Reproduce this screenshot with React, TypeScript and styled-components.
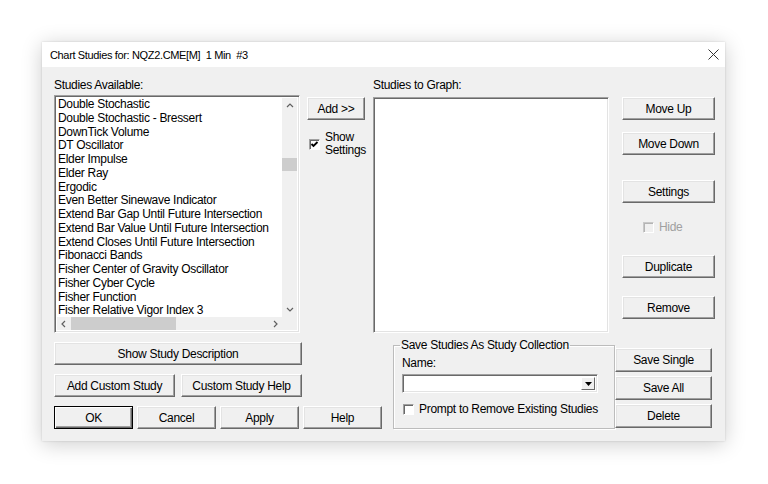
import React from "react";
import styled, { createGlobalStyle } from "styled-components";

const GlobalStyle = createGlobalStyle`
  html, body {
    margin: 0;
    padding: 0;
    background: #ffffff;
  }
  body {
    font-family: "Liberation Sans", Arial, sans-serif;
  }
`;

const studies = [
  "Double Stochastic",
  "Double Stochastic - Bressert",
  "DownTick Volume",
  "DT Oscillator",
  "Elder Impulse",
  "Elder Ray",
  "Ergodic",
  "Even Better Sinewave Indicator",
  "Extend Bar Gap Until Future Intersection",
  "Extend Bar Value Until Future Intersection",
  "Extend Closes Until Future Intersection",
  "Fibonacci Bands",
  "Fisher Center of Gravity Oscillator",
  "Fisher Cyber Cycle",
  "Fisher Function",
  "Fisher Relative Vigor Index 3",
];

const Page = styled.div`
  width: 768px;
  height: 484px;
  padding: 42px 0 0 42px;
  box-sizing: border-box;
  overflow: hidden;
`;

const Dialog = styled.div`
  width: 683px;
  height: 399px;
  background: #f0f0f0;
  box-shadow: 0 3px 20px rgba(0, 0, 0, 0.2), 0 0 2px rgba(0, 0, 0, 0.15);
  display: flex;
  flex-direction: column;
`;

const TitleBar = styled.div`
  height: 25px;
  background: #ffffff;
  display: flex;
  align-items: center;
  justify-content: space-between;
  padding: 0 6px 0 8px;
  flex-shrink: 0;
`;

const Title = styled.span`
  font-size: 11px;
  letter-spacing: -0.35px;
  color: #000;
  white-space: pre;
`;

const Body = styled.div`
  flex: 1;
  padding: 10px 12px 0 12px;
  font-size: 12px;
  letter-spacing: -0.3px;
  color: #000;
`;

const TopRow = styled.div`
  display: flex;
  align-items: flex-start;
`;

const Column = styled.div<{ $w: number; $ml?: number; $mt?: number }>`
  width: ${(p) => p.$w}px;
  margin-left: ${(p) => p.$ml ?? 0}px;
  margin-top: ${(p) => p.$mt ?? 0}px;
  display: flex;
  flex-direction: column;
  align-items: flex-start;
  flex-shrink: 0;
`;

const Label = styled.div<{ $h?: number; $mt?: number }>`
  height: ${(p) => p.$h ?? 18}px;
  margin-top: ${(p) => p.$mt ?? 0}px;
  line-height: 16px;
  white-space: nowrap;
`;

const sunken = `
  border: 1px solid;
  border-color: #a0a0a0 #ffffff #ffffff #a0a0a0;
  box-shadow: inset 1px 1px 0 #696969, inset -1px -1px 0 #e3e3e3;
`;

const ListBox = styled.div`
  ${sunken}
  width: 246px;
  height: 238px;
  box-sizing: border-box;
  padding: 2px;
  background: #ffffff;
  display: grid;
  grid-template-columns: 1fr 15px;
  grid-template-rows: 1fr 13px;
`;

const Items = styled.div`
  overflow: hidden;
  padding: 0 0 0 1px;
`;

const Item = styled.div`
  height: 13.75px;
  line-height: 13.75px;
  white-space: nowrap;
`;

const ScrollBar = styled.div<{ $horizontal?: boolean }>`
  background: #f0f0f0;
  display: flex;
  flex-direction: ${(p) => (p.$horizontal ? "row" : "column")};
  align-items: center;
`;

const Arrow = styled.div<{ $horizontal?: boolean }>`
  width: ${(p) => (p.$horizontal ? 13 : 15)}px;
  height: ${(p) => (p.$horizontal ? 13 : 15)}px;
  display: flex;
  align-items: center;
  justify-content: center;
  flex-shrink: 0;
`;

const Track = styled.div<{ $horizontal?: boolean }>`
  flex: 1;
  align-self: stretch;
  display: flex;
  flex-direction: ${(p) => (p.$horizontal ? "row" : "column")};
`;

const Thumb = styled.div<{ $horizontal?: boolean; $start: number; $size: number }>`
  background: #cdcdcd;
  ${(p) =>
    p.$horizontal
      ? `margin-left: ${p.$start}px; width: ${p.$size}px; height: 100%;`
      : `margin-top: ${p.$start}px; height: ${p.$size}px; width: 100%;`}
`;

const Corner = styled.div`
  background: #f0f0f0;
`;

const Button = styled.button<{ $w: number; $h?: number; $mt?: number; $default?: boolean }>`
  width: ${(p) => p.$w}px;
  height: ${(p) => p.$h ?? 23}px;
  margin-top: ${(p) => p.$mt ?? 0}px;
  padding: 0;
  flex-shrink: 0;
  font-family: "Liberation Sans", Arial, sans-serif;
  font-size: 12px;
  letter-spacing: -0.3px;
  color: #000;
  background: #f0f0f0;
  border: 1px solid;
  border-color: ${(p) => (p.$default ? "#000" : "#fff #696969 #696969 #fff")};
  box-shadow: ${(p) =>
    p.$default
      ? "inset 1px 1px 0 #fff, inset -1px -1px 0 #696969, inset -2px -2px 0 #a0a0a0"
      : "inset -1px -1px 0 #a0a0a0, inset 1px 1px 0 #e3e3e3"};
  cursor: default;
`;

const CheckRow = styled.div<{ $mt?: number; $ml?: number; $disabled?: boolean }>`
  display: flex;
  align-items: center;
  gap: 5px;
  margin-top: ${(p) => p.$mt ?? 0}px;
  margin-left: ${(p) => p.$ml ?? 0}px;
  color: ${(p) => (p.$disabled ? "#a0a0a0" : "#000")};
  line-height: 13px;
  white-space: nowrap;
`;

const Box = styled.span<{ $disabled?: boolean }>`
  width: 11px;
  height: 11px;
  box-sizing: border-box;
  border: 1px solid;
  border-color: ${(p) => (p.$disabled ? "#c8c8c8 #fff #fff #c8c8c8" : "#a0a0a0 #fff #fff #a0a0a0")};
  box-shadow: ${(p) => (p.$disabled ? "inset 1px 1px 0 #b4b4b4" : "inset 1px 1px 0 #696969")};
  background: ${(p) => (p.$disabled ? "#f0f0f0" : "#fff")};
  display: flex;
  align-items: center;
  justify-content: center;
  flex-shrink: 0;
`;

const GraphBox = styled.div`
  ${sunken}
  width: 236px;
  height: 236px;
  box-sizing: border-box;
  background: #fff;
`;

const BottomRow = styled.div`
  display: flex;
  align-items: flex-start;
  margin-top: 5px;
`;

const ButtonRow = styled.div<{ $gap: number; $mt?: number }>`
  display: flex;
  gap: ${(p) => p.$gap}px;
  margin-top: ${(p) => p.$mt ?? 0}px;
`;

const Group = styled.fieldset`
  width: 222px;
  height: 91px;
  box-sizing: border-box;
  margin: 0 0 0 11px;
  padding: 0 8px;
  border: 1px solid #bcbcbc;
  box-shadow: inset 1px 1px 0 #fff, 1px 1px 0 #fff;
  flex-shrink: 0;
  min-width: 0;
`;

const Legend = styled.legend`
  padding: 0 1px;
  margin-left: -2px;
  font-size: 12px;
  line-height: 14px;
  white-space: nowrap;
`;

const Combo = styled.div`
  ${sunken}
  width: 196px;
  height: 19px;
  box-sizing: border-box;
  background: #fff;
  margin-top: 5px;
  display: flex;
  justify-content: flex-end;
  padding: 2px;
`;

const DropButton = styled.div`
  width: 14px;
  height: 100%;
  box-sizing: border-box;
  background: #f0f0f0;
  border: 1px solid;
  border-color: #fff #696969 #696969 #fff;
  display: flex;
  align-items: center;
  justify-content: center;
`;

const Chevron = ({ dir }: { dir: "up" | "down" | "left" | "right" }) => {
  const d = {
    up: "M1 5 L4 2 L7 5",
    down: "M1 2 L4 5 L7 2",
    left: "M5 1 L2 4 L5 7",
    right: "M2 1 L5 4 L2 7",
  }[dir];
  const horiz = dir === "left" || dir === "right";
  return (
    <svg width={horiz ? 7 : 8} height={horiz ? 8 : 7} viewBox={horiz ? "0 0 7 8" : "0 0 8 7"}>
      <path d={d} fill="none" stroke="#606060" strokeWidth="1.2" />
    </svg>
  );
};

const Check = () => (
  <svg width="9" height="9" viewBox="0 0 9 9">
    <path d="M1.5 4 L3.5 6 L7.5 2" fill="none" stroke="#000" strokeWidth="1.8" />
  </svg>
);

const CloseIcon = () => (
  <svg width="11" height="11" viewBox="0 0 11 11">
    <path d="M0.5 0.5 L10.5 10.5 M10.5 0.5 L0.5 10.5" stroke="#333" strokeWidth="1" />
  </svg>
);

export default function App() {
  return (
    <>
      <GlobalStyle />
      <Page>
        <Dialog>
          <TitleBar>
            <Title>{"Chart Studies for: NQZ2.CME[M]  1 Min  #3"}</Title>
            <CloseIcon />
          </TitleBar>
          <Body>
            <TopRow>
              <Column $w={246}>
                <Label>Studies Available:</Label>
                <ListBox>
                  <Items>
                    {studies.map((s) => (
                      <Item key={s}>{s}</Item>
                    ))}
                  </Items>
                  <ScrollBar>
                    <Arrow>
                      <Chevron dir="up" />
                    </Arrow>
                    <Track>
                      <Thumb $start={45} $size={13} />
                    </Track>
                    <Arrow>
                      <Chevron dir="down" />
                    </Arrow>
                  </ScrollBar>
                  <ScrollBar $horizontal>
                    <Arrow $horizontal>
                      <Chevron dir="left" />
                    </Arrow>
                    <Track $horizontal>
                      <Thumb $horizontal $start={1} $size={105} />
                    </Track>
                    <Arrow $horizontal>
                      <Chevron dir="right" />
                    </Arrow>
                  </ScrollBar>
                  <Corner />
                </ListBox>
              </Column>

              <Column $w={58} $ml={7} $mt={20}>
                <Button $w={58}>Add &gt;&gt;</Button>
                <CheckRow $mt={11} $ml={2}>
                  <Box>
                    <Check />
                  </Box>
                  <span>
                    Show
                    <br />
                    Settings
                  </span>
                </CheckRow>
              </Column>

              <Column $w={236} $ml={8}>
                <Label $h={20}>Studies to Graph:</Label>
                <GraphBox />
              </Column>

              <Column $w={93} $ml={13} $mt={20}>
                <Button $w={93}>Move Up</Button>
                <Button $w={93} $mt={12}>
                  Move Down
                </Button>
                <Button $w={93} $mt={25}>
                  Settings
                </Button>
                <CheckRow $mt={18} $ml={21} $disabled>
                  <Box $disabled />
                  <span>Hide</span>
                </CheckRow>
                <Button $w={93} $mt={21}>
                  Duplicate
                </Button>
                <Button $w={93} $mt={18}>
                  Remove
                </Button>
              </Column>
            </TopRow>

            <BottomRow>
              <Column $w={328}>
                <Button $w={248} $mt={4}>
                  Show Study Description
                </Button>
                <ButtonRow $gap={6} $mt={9}>
                  <Button $w={121}>Add Custom Study</Button>
                  <Button $w={121}>Custom Study Help</Button>
                </ButtonRow>
                <ButtonRow $gap={4} $mt={9}>
                  <Button $w={79} $default>
                    OK
                  </Button>
                  <Button $w={79}>Cancel</Button>
                  <Button $w={79}>Apply</Button>
                  <Button $w={79}>Help</Button>
                </ButtonRow>
              </Column>

              <Group>
                <Legend>Save Studies As Study Collection</Legend>
                <Label $h={14} $mt={3}>
                  Name:
                </Label>
                <Combo>
                  <DropButton>
                    <svg width="7" height="4" viewBox="0 0 7 4">
                      <path d="M0 0 H7 L3.5 4 Z" fill="#000" />
                    </svg>
                  </DropButton>
                </Combo>
                <CheckRow $mt={10} $ml={1}>
                  <Box />
                  <span>Prompt to Remove Existing Studies</span>
                </CheckRow>
              </Group>

              <Column $w={97} $mt={10}>
                <Button $w={97} $h={24}>
                  Save Single
                </Button>
                <Button $w={97} $h={24} $mt={4}>
                  Save All
                </Button>
                <Button $w={97} $h={24} $mt={4}>
                  Delete
                </Button>
              </Column>
            </BottomRow>
          </Body>
        </Dialog>
      </Page>
    </>
  );
}
